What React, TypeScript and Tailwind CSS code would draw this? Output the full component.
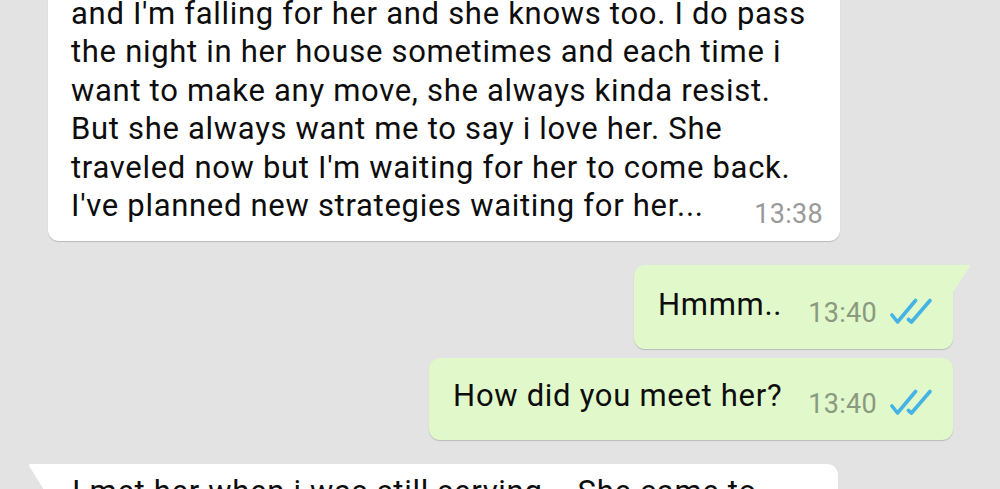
import React from "react";

const Checks = () => (
  <svg width="42" height="27" viewBox="0 0 42 27" fill="none" className="shrink-0">
    <path d="M2 17 L7.5 24 L25.5 2.5" stroke="#45b3e4" strokeWidth="3.6" strokeLinecap="round" strokeLinejoin="round" />
    <path d="M18.5 21.5 L21.5 24 L40 2.5" stroke="#45b3e4" strokeWidth="3.6" strokeLinecap="round" strokeLinejoin="round" />
  </svg>
);

const firstLines = [
  "and I'm falling for her and she knows too. I do pass",
  "the night in her house sometimes and each time i",
  "want to make any move, she always kinda resist.",
  "But she always want me to say i love her. She",
  "traveled now but I'm waiting for her to come back.",
];

export default function App() {
  return (
    <div
      className="w-[1000px] h-[489px] overflow-hidden bg-[#e3e3e3] flex flex-col text-[#0d0d0d]"
      style={{ fontFamily: "Roboto, 'Noto Sans', sans-serif" }}
    >
      {/* first incoming bubble (cut at top) */}
      <div className="ml-[48px] mt-[-40px] w-[792px] bg-white rounded-[11px] shadow-[0_1px_1px_rgba(0,0,0,0.18)] pt-[34.5px] pb-[14px] pl-[23px] pr-[17px] text-[31px] leading-[38.5px] tracking-[0.7px]">
        {firstLines.map((l) => (
          <div key={l} className="whitespace-nowrap">{l}</div>
        ))}
        <div className="flex items-baseline whitespace-nowrap">
          <span>I've planned new strategies waiting for her...</span>
          <span className="ml-auto text-[27px] text-[#9a9a9a] tracking-[0.3px] translate-y-[7px]">13:38</span>
        </div>
      </div>

      {/* outgoing 1 */}
      <div className="self-end mr-[47px] mt-[24px] relative">
        <div className="flex items-baseline bg-[#e0f8ca] rounded-[11px] rounded-tr-none shadow-[0_1px_1px_rgba(0,0,0,0.18)] pl-[24px] pr-[21px] pt-[21px] pb-[23.5px] text-[31px] leading-[38.5px] tracking-[0.7px] whitespace-nowrap">
          <span>Hmmm..</span>
          <span className="ml-[26px] text-[27px] text-[#8a9a80] tracking-[0.3px] translate-y-[7px]">13:40</span>
          <span className="ml-[13px] self-end"><Checks /></span>
        </div>
        <svg className="absolute top-0 right-[-18px]" width="19" height="30" viewBox="0 0 19 30">
          <path d="M0 0 L16 0 Q19 0 17.5 2 L0 29 Z" fill="#e0f8ca" />
        </svg>
      </div>

      {/* outgoing 2 */}
      <div className="self-end mr-[47px] mt-[9px] flex items-baseline bg-[#e0f8ca] rounded-[11px] shadow-[0_1px_1px_rgba(0,0,0,0.18)] pl-[24px] pr-[21px] pt-[19px] pb-[23.5px] text-[31px] leading-[38.5px] tracking-[0.7px] whitespace-nowrap">
        <span>How did you meet her?</span>
        <span className="ml-[26px] text-[27px] text-[#8a9a80] tracking-[0.3px] translate-y-[7px]">13:40</span>
        <span className="ml-[13px] self-end"><Checks /></span>
      </div>

      {/* incoming 2 (cut at bottom) */}
      <div className="ml-[48px] mt-[24.5px] w-[790px] relative">
        <svg className="absolute top-0 left-[-20px]" width="21" height="34" viewBox="0 0 21 34">
          <path d="M21 0 L3 0 Q0 0 1.5 2.5 L21 34 Z" fill="#ffffff" />
        </svg>
        <div className="bg-white rounded-[11px] rounded-tl-none pt-[9px] pb-[14px] pl-[24px] pr-[17px] text-[31px] leading-[38.5px] tracking-[0.7px] whitespace-nowrap">
          I met her when i was still serving... She came to
        </div>
      </div>
    </div>
  );
}
